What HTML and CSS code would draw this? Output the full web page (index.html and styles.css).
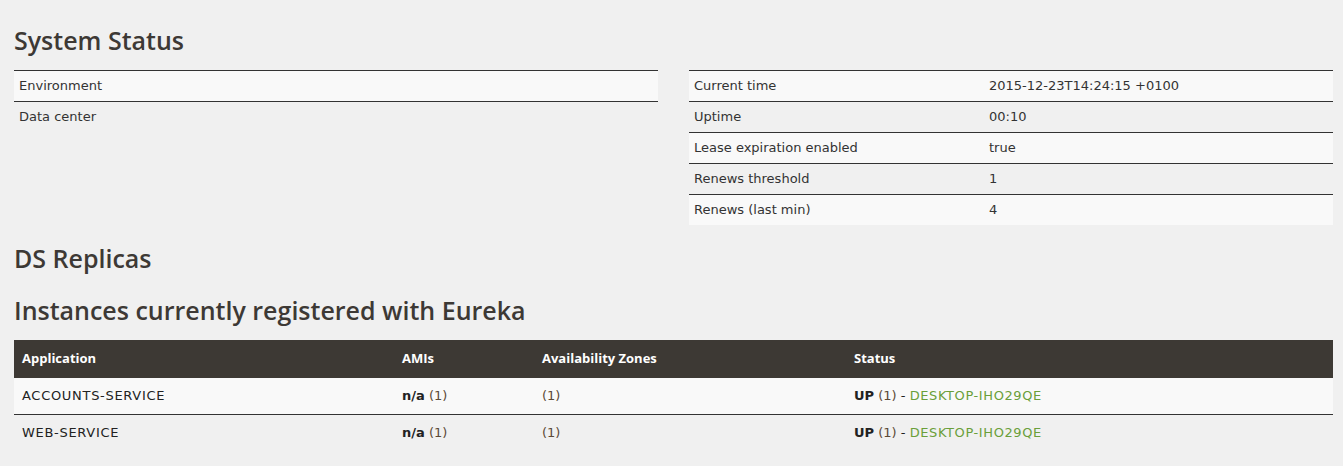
FILE: index.html
```html
<!DOCTYPE html>
<html lang="en">
<head>
<meta charset="utf-8">
<title>Eureka</title>
<link rel="stylesheet" href="styles.css">
</head>
<body>
<main class="page">
  <h2 class="title first">System Status</h2>
  <div class="status-grid">
    <table class="kv">
      <tbody>
        <tr class="odd"><td>Environment</td></tr>
        <tr><td>Data center</td></tr>
      </tbody>
    </table>
    <table class="kv">
      <tbody>
        <tr class="odd"><td class="key">Current time</td><td>2015-12-23T14:24:15 +0100</td></tr>
        <tr><td class="key">Uptime</td><td>00:10</td></tr>
        <tr class="odd"><td class="key">Lease expiration enabled</td><td>true</td></tr>
        <tr><td class="key">Renews threshold</td><td>1</td></tr>
        <tr class="odd"><td class="key">Renews (last min)</td><td>4</td></tr>
      </tbody>
    </table>
  </div>
  <h2 class="title ds">DS Replicas</h2>
  <h2 class="title inst">Instances currently registered with Eureka</h2>
  <table class="instances">
    <thead>
      <tr>
        <th class="c-app">Application</th>
        <th class="c-ami">AMIs</th>
        <th class="c-az">Availability Zones</th>
        <th class="c-status">Status</th>
      </tr>
    </thead>
    <tbody>
      <tr class="odd">
        <td class="app">ACCOUNTS-SERVICE</td>
        <td><b>n/a</b> <span class="count">(1)</span></td>
        <td><span class="count">(1)</span></td>
        <td><b>UP</b> <span class="count">(1)</span> - <a href="#" class="host">DESKTOP-IHO29QE</a></td>
      </tr>
      <tr>
        <td class="app">WEB-SERVICE</td>
        <td><b>n/a</b> <span class="count">(1)</span></td>
        <td><span class="count">(1)</span></td>
        <td><b>UP</b> <span class="count">(1)</span> - <a href="#" class="host">DESKTOP-IHO29QE</a></td>
      </tr>
    </tbody>
  </table>
</main>
</body>
</html>
```

FILE: styles.css
```css
html, body {
  margin: 0;
  padding: 0;
  background: #f0f0f0;
}

body {
  font-family: "DejaVu Sans", "Open Sans", sans-serif;
  font-size: 13px;
  color: #333;
}

.page {
  padding: 0 10px 0 14px;
}

.title {
  margin: 0;
  font-family: "Open Sans", "Noto Sans", sans-serif;
  font-size: 25px;
  line-height: 30px;
  font-weight: 600;
  color: #3d3935;
}

.title.first { padding-top: 25px; margin-bottom: 15px; }
.title.ds { margin-top: 18px; }
.title.inst { margin-top: 22px; margin-bottom: 15px; }

.status-grid {
  display: grid;
  grid-template-columns: 644px 644px;
  column-gap: 31px;
  align-items: start;
}

table {
  border-collapse: collapse;
  width: 100%;
}

.kv td {
  border-top: 1px solid #333;
  height: 28px;
  padding: 0 5px 2px;
  vertical-align: middle;
  color: #333;
}

.kv td.key { width: 285px; }

tr.odd { background: #f9f9f9; }

.instances {
  width: 1319px;
}

.instances th {
  font-family: "Open Sans", "Noto Sans", sans-serif;
  background: #3d3934;
  color: #fff;
  font-weight: 700;
  text-align: left;
  height: 36px;
  padding: 0 8px 2px;
  vertical-align: middle;
}

.instances td {
  height: 34px;
  padding: 0 8px 2px;
  vertical-align: middle;
  color: #222;
}

.instances tbody tr + tr td { border-top: 1px solid #333; }

.c-app { width: 364px; }
.c-ami { width: 124px; }
.c-az { width: 296px; }

.instances td.app { letter-spacing: 0.7px; }

.instances b { font-weight: 600; color: #222; }

.count { color: #5c4a36; }

.host {
  color: #6a9f3a;
  text-decoration: none;
  letter-spacing: 0.6px;
}
```
